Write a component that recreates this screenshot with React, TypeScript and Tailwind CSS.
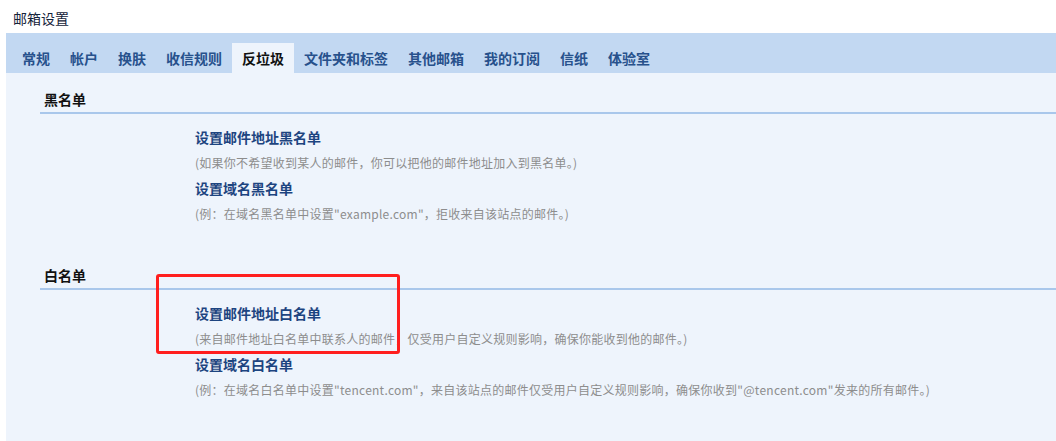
const tabs = ["常规", "帐户", "换肤", "收信规则", "反垃圾", "文件夹和标签", "其他邮箱", "我的订阅", "信纸", "体验室"];

const Section = ({ title, items, className = "" }) => (
    <div className={"ml-[34px] " + className}>
        <div className="pl-[4px] pb-[3px] text-[14px] leading-[20px] font-bold text-[#111] border-b-2 border-[#a9c7eb]">{title}</div>
        <div className="pl-[155px] pt-[10px]">
            {items.map((it) => (
                <div key={it.label}>
                    <div className="h-[26px] leading-[26px] text-[14px] font-bold text-[#1d4480]">{it.label}</div>
                    <div className="h-[25px] leading-[25px] text-[12px] tracking-[0.25px] text-[#8d8d8d]">{it.desc}</div>
                </div>
            ))}
        </div>
    </div>
);

export default function App() {
    return (
        <div className="w-[1056px] h-[441px] bg-white overflow-hidden flex flex-col" style={{ fontFamily: '"Microsoft YaHei", "Noto Sans CJK SC", sans-serif' }}>
            <div className="h-[33px] pl-[13px] pt-[8px] text-[14px] leading-[20px] text-[#14233a]">邮箱设置</div>
            <div className="ml-[6px] h-[40px] bg-[#c2d8f2] flex items-end pl-[6px]">
                {tabs.map((t) => (
                    <div
                        key={t}
                        className={
                            t === "反垃圾"
                                ? "h-[30px] px-[10px] text-[14px] leading-[30px] font-bold bg-[#eef4fc] text-[#111]"
                                : "h-[30px] px-[10px] text-[14px] leading-[30px] font-bold text-[#27518c]"
                        }
                    >
                        {t}
                    </div>
                ))}
            </div>
            <div className="ml-[6px] flex-1 bg-[#eef4fc] pt-[16px] relative">
                <Section
                    title="黑名单"
                    items={[
                        { label: "设置邮件地址黑名单", desc: "(如果你不希望收到某人的邮件，你可以把他的邮件地址加入到黑名单。)" },
                        { label: "设置域名黑名单", desc: "(例：在域名黑名单中设置\"example.com\"，拒收来自该站点的邮件。)" },
                    ]}
                />
                <Section
                    className="mt-[39px]"
                    title="白名单"
                    items={[
                        { label: "设置邮件地址白名单", desc: "(来自邮件地址白名单中联系人的邮件，仅受用户自定义规则影响，确保你能收到他的邮件。)" },
                        { label: "设置域名白名单", desc: "(例：在域名白名单中设置\"tencent.com\"，来自该站点的邮件仅受用户自定义规则影响，确保你收到\"@tencent.com\"发来的所有邮件。)" },
                    ]}
                />
                <div className="absolute left-[150px] top-[201px] w-[244px] h-[80px] border-[3px] border-[#ff1e1e] rounded-[3px] pointer-events-none" />
            </div>
        </div>
    );
}
